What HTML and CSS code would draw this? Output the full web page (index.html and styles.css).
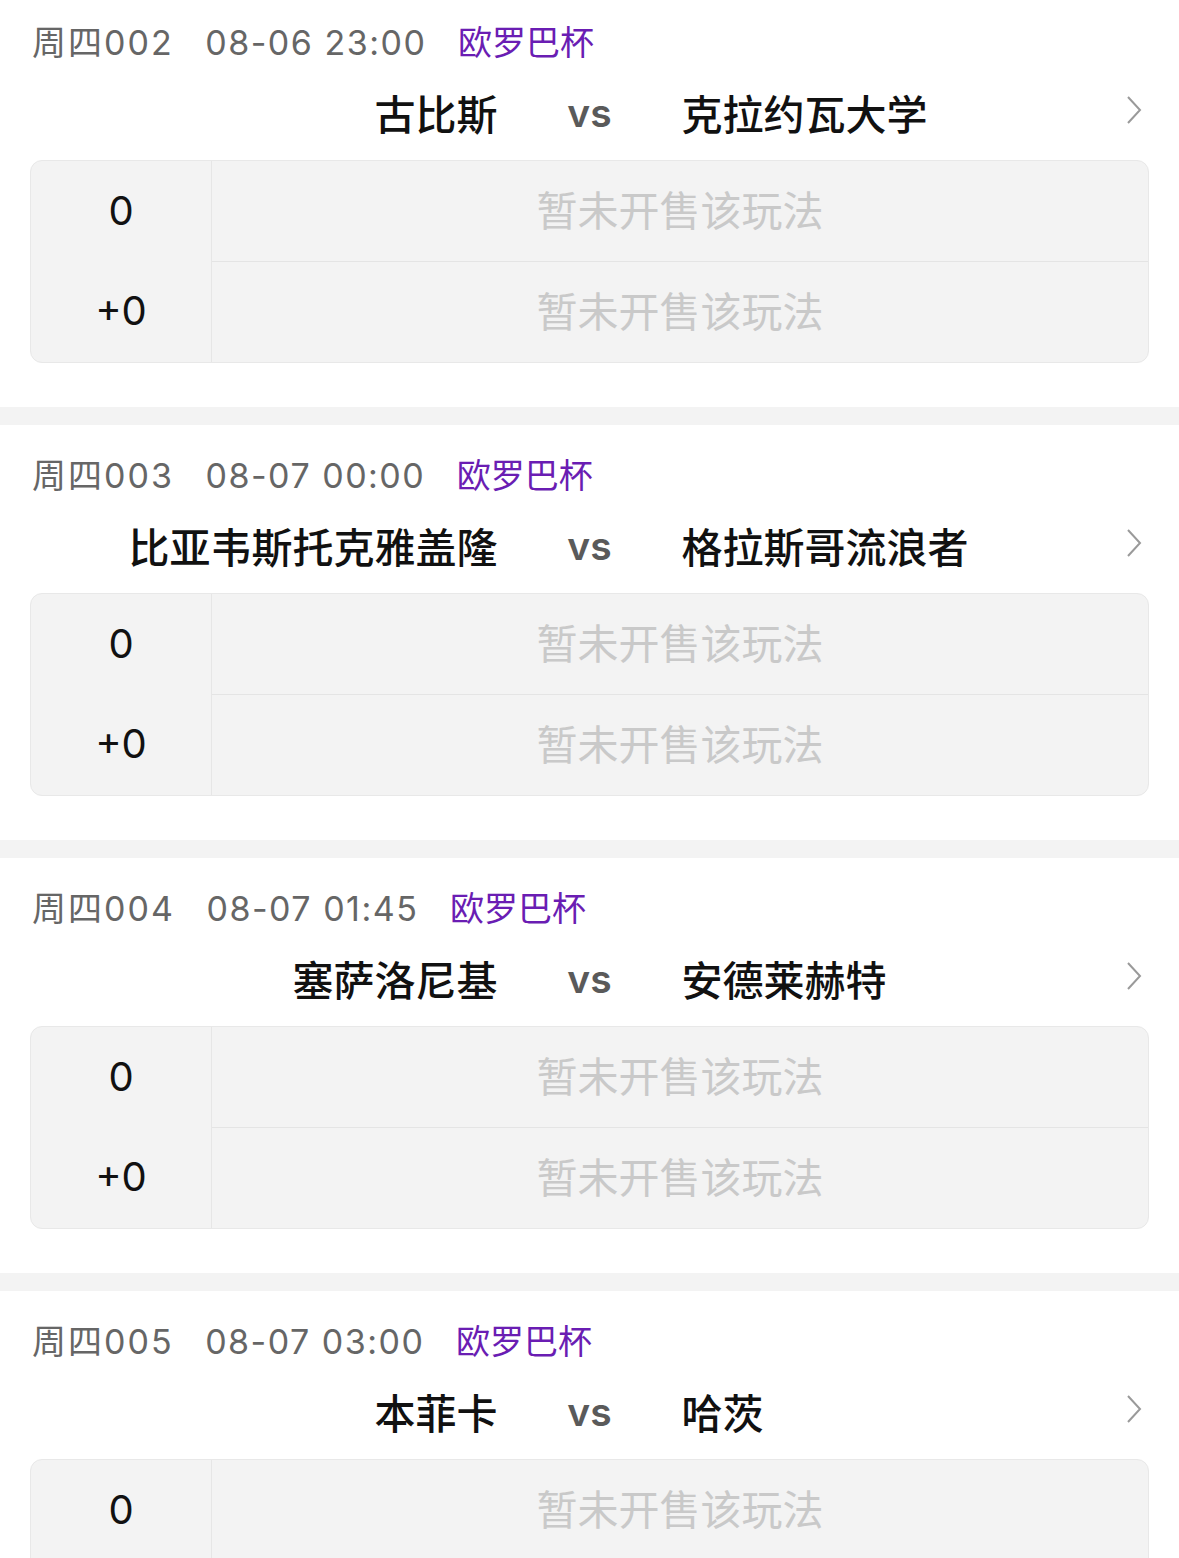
FILE: index.html
```html
<!DOCTYPE html>
<html lang="zh-CN">
<head>
  <meta charset="UTF-8" />
  <meta name="viewport" content="width=device-width, initial-scale=1.0"/>
  <title>竞彩足球</title>
  <link rel="stylesheet" href="styles.css">
</head>
<body>
  <div class="match-list">

    <div class="match">
      <div class="match-info">
        <span class="match-no">周四002</span>
        <span class="match-time">08-06 23:00</span>
        <span class="league">欧罗巴杯</span>
      </div>
      <div class="teams">
        <span class="home">古比斯</span>
        <span class="vs">vs</span>
        <span class="away">克拉约瓦大学</span>
        <svg class="arrow" width="16" height="30" viewBox="0 0 16 30"><polyline points="2,2 14,15 2,28" fill="none" stroke="#9a9a9a" stroke-width="2"/></svg>
      </div>
      <div class="odds">
        <div class="handicap"><div>0</div><div>+0</div></div>
        <div class="plays">
          <div class="play">暂未开售该玩法</div>
          <div class="play">暂未开售该玩法</div>
        </div>
      </div>
    </div>

    <div class="match">
      <div class="match-info">
        <span class="match-no">周四003</span>
        <span class="match-time">08-07 00:00</span>
        <span class="league">欧罗巴杯</span>
      </div>
      <div class="teams">
        <span class="home">比亚韦斯托克雅盖隆</span>
        <span class="vs">vs</span>
        <span class="away">格拉斯哥流浪者</span>
        <svg class="arrow" width="16" height="30" viewBox="0 0 16 30"><polyline points="2,2 14,15 2,28" fill="none" stroke="#9a9a9a" stroke-width="2"/></svg>
      </div>
      <div class="odds">
        <div class="handicap"><div>0</div><div>+0</div></div>
        <div class="plays">
          <div class="play">暂未开售该玩法</div>
          <div class="play">暂未开售该玩法</div>
        </div>
      </div>
    </div>

    <div class="match">
      <div class="match-info">
        <span class="match-no">周四004</span>
        <span class="match-time">08-07 01:45</span>
        <span class="league">欧罗巴杯</span>
      </div>
      <div class="teams">
        <span class="home">塞萨洛尼基</span>
        <span class="vs">vs</span>
        <span class="away">安德莱赫特</span>
        <svg class="arrow" width="16" height="30" viewBox="0 0 16 30"><polyline points="2,2 14,15 2,28" fill="none" stroke="#9a9a9a" stroke-width="2"/></svg>
      </div>
      <div class="odds">
        <div class="handicap"><div>0</div><div>+0</div></div>
        <div class="plays">
          <div class="play">暂未开售该玩法</div>
          <div class="play">暂未开售该玩法</div>
        </div>
      </div>
    </div>

    <div class="match">
      <div class="match-info">
        <span class="match-no">周四005</span>
        <span class="match-time">08-07 03:00</span>
        <span class="league">欧罗巴杯</span>
      </div>
      <div class="teams">
        <span class="home">本菲卡</span>
        <span class="vs">vs</span>
        <span class="away">哈茨</span>
        <svg class="arrow" width="16" height="30" viewBox="0 0 16 30"><polyline points="2,2 14,15 2,28" fill="none" stroke="#9a9a9a" stroke-width="2"/></svg>
      </div>
      <div class="odds">
        <div class="handicap"><div>0</div><div>+0</div></div>
        <div class="plays">
          <div class="play">暂未开售该玩法</div>
          <div class="play">暂未开售该玩法</div>
        </div>
      </div>
    </div>

  </div>
</body>
</html>
```

FILE: styles.css
```css
body {
  margin: 0;
  background-color: #fff;
  font-family: Inter, "Noto Sans CJK SC", sans-serif;
  color: #111;
  overflow: hidden;
}
.match-list {
  margin-top: -8px;
}
.match {
  background-color: #fff;
  padding: 29px 0 44px;
  border-bottom: 18px solid #f3f3f3;
}
.match-info {
  padding-left: 32px;
  font-size: 34px;
  line-height: 44px;
  color: #666;
  white-space: nowrap;
}
.match-info span {
  margin-right: 22px;
}
.match-no {
  letter-spacing: 2px;
}
.match-time {
  letter-spacing: 1.5px;
}
.league {
  color: #6a1db3;
}
.teams {
  position: relative;
  display: grid;
  grid-template-columns: 1fr 184px 1fr;
  align-items: center;
  margin-top: 17px;
  height: 56px;
  font-size: 41px;
  font-weight: 500;
  white-space: nowrap;
}
.home {
  text-align: right;
}
.vs {
  text-align: center;
  color: #5a5a5a;
  font-weight: 600;
  font-size: 39px;
}
.away {
  text-align: left;
}
.arrow {
  position: absolute;
  right: 37px;
  top: 13px;
}
.odds {
  display: flex;
  margin: 22px 30px 0;
  background-color: #f3f3f3;
  border: 1px solid #e8e8e8;
  border-radius: 12px;
  overflow: hidden;
}
.handicap {
  width: 180px;
  border-right: 1px solid #e6e6e6;
  font-size: 40px;
  text-align: center;
}
.handicap div {
  height: 100px;
  line-height: 100px;
}
.plays {
  flex: 1;
}
.play {
  height: 100px;
  line-height: 100px;
  text-align: center;
  font-size: 41px;
  color: #c9c9c9;
}
.play + .play {
  border-top: 1px solid #e4e4e4;
}
```
